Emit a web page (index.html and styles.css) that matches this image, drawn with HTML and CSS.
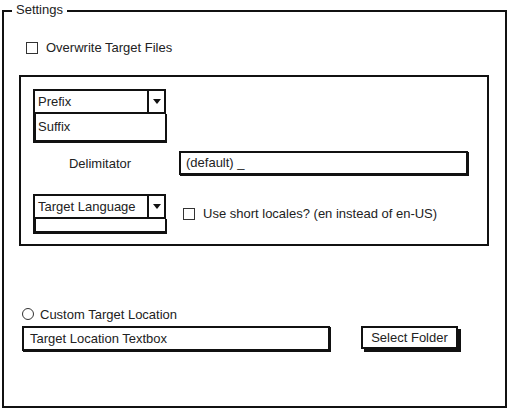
FILE: index.html
```html
<!DOCTYPE html>
<html>

<head>
    <meta charset="utf-8" />
    <title>Settings</title>
    <link rel="stylesheet" href="styles.css">
</head>

<body>
    <!-- 设置面板 -->
    <div class="frame">
        <span class="legend">Settings</span>

        <label class="check overwrite"><span class="box"></span>Overwrite Target Files</label>

        <!-- 文件名选项 -->
        <div class="group">
            <div class="combo-col first">
                <div class="combo">
                    <span class="combo-text">Prefix</span>
                    <span class="combo-btn"><span class="arrow"></span></span>
                </div>
                <div class="combo-list">Suffix</div>
            </div>

            <div class="row delim">
                <div class="label-col">Delimitator</div>
                <div class="input delim-input">(default) _</div>
            </div>

            <div class="row lang">
                <div class="combo-col">
                    <div class="combo">
                        <span class="combo-text">Target Language</span>
                        <span class="combo-btn"><span class="arrow"></span></span>
                    </div>
                    <div class="combo-list empty"></div>
                </div>
                <label class="check short"><span class="box"></span>Use short locales? (en instead of en-US)</label>
            </div>
        </div>

        <!-- 目标位置 -->
        <label class="radio"><span class="circle"></span>Custom Target Location</label>
        <div class="row location">
            <div class="input location-input">Target Location Textbox</div>
            <div class="btn">Select Folder</div>
        </div>
    </div>
</body>

</html>
```

FILE: styles.css
```css
* {
    padding: 0;
    margin: 0;
    box-sizing: border-box;
}

body {
    font-family: "Liberation Sans", Arial, sans-serif;
    font-size: 13px;
    color: #222222;
    background: #ffffff;
}

/* 外框 */
.frame {
    position: relative;
    margin: 10px 0 0 2px;
    width: 505px;
    height: 398px;
    border: 2px solid #111111;
    display: flex;
    flex-direction: column;
    align-items: flex-start;
}

.legend {
    position: absolute;
    left: 8px;
    top: -10px;
    padding: 0 4px;
    background: #ffffff;
    line-height: 16px;
}

/* 复选框 */
.check {
    display: flex;
    align-items: center;
    height: 16px;
    line-height: 16px;
}

.box {
    width: 12px;
    height: 12px;
    border: 1.5px solid #333333;
    margin-right: 8px;
}

.overwrite {
    margin: 28px 0 0 22px;
}

/* 分组框 */
.group {
    margin: 19px 0 0 15px;
    width: 470px;
    height: 171px;
    border: 2px solid #111111;
    padding: 12px 0 0 12px;
}

.row {
    display: flex;
    align-items: flex-start;
}

/* 下拉框 */
.combo-col {
    width: 134px;
}

.combo {
    display: flex;
    height: 25px;
    width: 133px;
    border: 2px solid #111111;
}

.combo-text {
    flex: 1;
    padding-left: 3px;
    line-height: 21px;
}

.combo-btn {
    width: 17px;
    border-left: 2px solid #111111;
    display: flex;
    justify-content: center;
    align-items: center;
}

.arrow {
    width: 0;
    height: 0;
    border-left: 4px solid transparent;
    border-right: 4px solid transparent;
    border-top: 5px solid #111111;
}

.combo-list {
    width: 134px;
    height: 29px;
    border-left: 3px solid #111111;
    border-right: 2px solid #111111;
    border-bottom: 3px solid #111111;
    padding-left: 2px;
    line-height: 25px;
}

.combo-list.empty {
    height: 15px;
}

/* 文本框 */
.input {
    height: 24px;
    border: 2px solid #111111;
    box-shadow: 1px 1px 0 #111111;
    line-height: 20px;
    padding-left: 5px;
}

.delim {
    margin-top: 8px;
    align-items: center;
}

.label-col {
    width: 134px;
    text-align: center;
}

.delim-input {
    margin-left: 12px;
    width: 289px;
}

.lang {
    margin-top: 19px;
}

.short {
    margin: 12px 0 0 16px;
}

/* 单选 */
.radio {
    display: flex;
    align-items: center;
    height: 16px;
    margin: 60px 0 0 18px;
}

.circle {
    width: 12px;
    height: 12px;
    border: 1.2px solid #333333;
    border-radius: 50%;
    margin-right: 6px;
}

.location {
    margin: 4px 0 0 18px;
}

.location-input {
    width: 308px;
    height: 25px;
    line-height: 21px;
    padding-left: 6px;
}

/* 按钮 */
.btn {
    margin-left: 31px;
    width: 97px;
    height: 23px;
    border: 2px solid #111111;
    box-shadow: 3px 3px 0 #111111;
    text-align: center;
    line-height: 19px;
}
```
